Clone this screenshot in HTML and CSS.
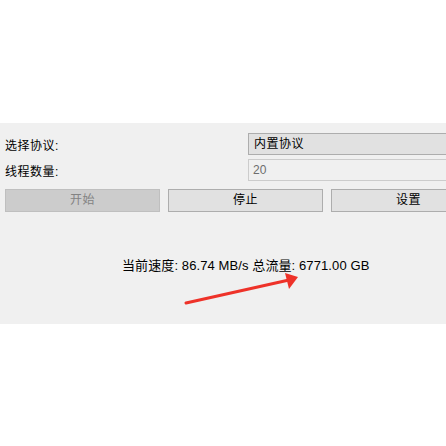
FILE: index.html
```html
<!DOCTYPE html>
<html>
<head>
<meta charset="utf-8">
<link rel="stylesheet" href="styles.css">
</head>
<body>
<div class="top"></div>
<div class="panel">
  <div class="row">
    <span class="label">选择协议:</span>
    <div class="combo">内置协议</div>
  </div>
  <div class="row">
    <span class="label">线程数量:</span>
    <div class="field">20</div>
  </div>
  <div class="buttons">
    <div class="btn disabled">开始</div>
    <div class="btn">停止</div>
    <div class="btn">设置</div>
  </div>
  <div class="status">当前速度: 86.74 MB/s 总流量: 6771.00 GB</div>
  <svg class="arrow" width="446" height="446" viewBox="0 0 446 446">
    <line x1="186" y1="303" x2="289" y2="280" stroke="#ee3229" stroke-width="3" stroke-linecap="round"/>
    <polygon points="298,277 285,273 289,289" fill="#ee3229"/>
  </svg>
</div>
</body>
</html>
```
FILE: styles.css
```css
html, body {
  margin: 0;
  padding: 0;
  background: #ffffff;
  overflow: hidden;
  width: 446px;
  height: 446px;
}
body {
  font-family: "Liberation Sans", "Noto Sans CJK SC", sans-serif;
  font-size: 12px;
  color: #000;
}
.top {
  height: 123px;
}
.panel {
  height: 201px;
  background: #f0f0f0;
  padding: 10px 0 0 5px;
  box-sizing: border-box;
  display: flex;
  flex-direction: column;
  white-space: nowrap;
  overflow: hidden;
}
.row {
  display: flex;
  align-items: center;
  height: 22px;
  margin-bottom: 4px;
}
.label {
  width: 243px;
  flex: none;
  font-size: 12px;
  letter-spacing: 0.5px;
}
.combo {
  flex: none;
  width: 260px;
  height: 22px;
  box-sizing: border-box;
  background: #e1e1e1;
  border: 1px solid #adadad;
  padding-left: 5px;
  line-height: 20px;
  font-size: 12px;
  letter-spacing: 0.5px;
}
.field {
  flex: none;
  width: 260px;
  height: 22px;
  box-sizing: border-box;
  background: #f0f0f0;
  border: 1px solid #cccccc;
  padding-left: 4px;
  line-height: 20px;
  color: #6d6d6d;
  font-size: 12px;
}
.buttons {
  display: grid;
  grid-template-columns: 155px 155px 155px;
  gap: 8px;
  margin-top: 4px;
}
.btn {
  height: 23px;
  box-sizing: border-box;
  background: #e1e1e1;
  border: 1px solid #adadad;
  text-align: center;
  line-height: 21px;
  font-size: 12px;
  letter-spacing: 0.5px;
}
.btn.disabled {
  background: #cccccc;
  border-color: #bfbfbf;
  color: #838383;
}
.status {
  margin-top: 46px;
  margin-left: 117px;
  font-size: 13px;
  line-height: 16px;
  letter-spacing: 0.1px;
}
.arrow {
  position: absolute;
  left: 0;
  top: 0;
  pointer-events: none;
}
```
